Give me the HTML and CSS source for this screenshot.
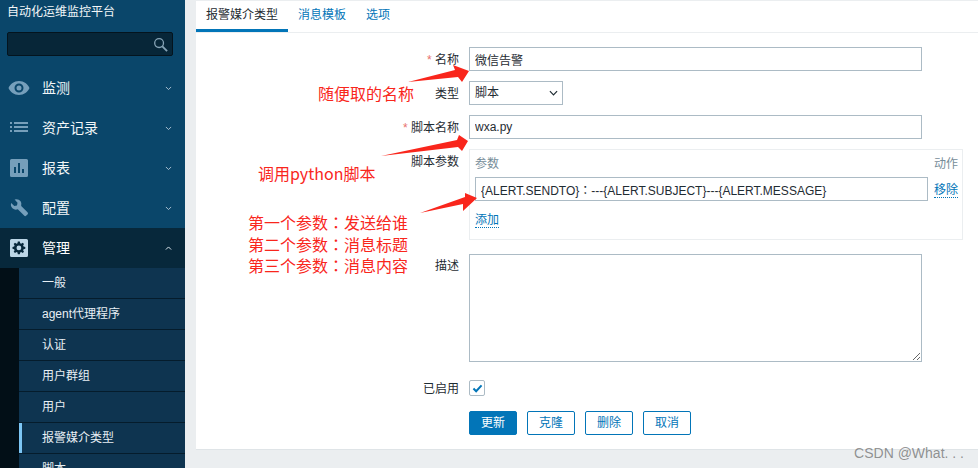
FILE: index.html
```html
<!DOCTYPE html>
<html lang="zh">
<head>
<meta charset="utf-8">
<title>报警媒介类型</title>
<link rel="stylesheet" href="styles.css">
</head>
<body>
<div class="page">
  <aside class="sidebar">
    <div class="brand">自动化运维监控平台</div>
    <div class="search">
      <svg class="search-icon" viewBox="0 0 16 16"><circle cx="6.500" cy="6.500" r="4.700" fill="none" stroke="currentColor" stroke-width="1.400"/><path d="M10 10l5 5" stroke="currentColor" stroke-width="2" fill="none"/></svg>
    </div>
    <nav class="nav">
      <div class="nav-item">
        <svg class="nav-icon" viewBox="0 0 22 16"><path fill-rule="evenodd" d="M11 1C6 1 2.300 4 .5 8c1.800 4 5.500 7 10.500 7s8.700-3 10.500-7C19.700 4 16 1 11 1zm0 2.500a4.500 4.500 0 1 1 0 9 4.500 4.500 0 0 1 0-9zM11 5.500a2.500 2.500 0 1 0 0 5 2.500 2.500 0 0 0 0-5z"/></svg>
        <span class="nav-label">监测</span>
        <svg class="chev" viewBox="0 0 8 5"><path d="M1 1l3 3 3-3"/></svg>
      </div>
      <div class="nav-item">
        <svg class="nav-icon" viewBox="-2 -3 22 18"><path d="M0 0h2v2H0zM4 0h14v2H4zM0 4h2v2H0zM4 4h14v2H4zM0 8h2v2H0zM4 8h14v2H4z"/></svg>
        <span class="nav-label">资产记录</span>
        <svg class="chev" viewBox="0 0 8 5"><path d="M1 1l3 3 3-3"/></svg>
      </div>
      <div class="nav-item">
        <svg class="nav-icon" viewBox="0 0 18 18"><path fill-rule="evenodd" d="M1.500 0h15A1.500 1.500 0 0 1 18 1.500v15a1.500 1.500 0 0 1-1.500 1.500h-15A1.500 1.500 0 0 1 0 16.500v-15A1.500 1.500 0 0 1 1.500 0zM4 8v6h2V8zM8 4v10h2V4zM12 10v4h2v-4z"/></svg>
        <span class="nav-label">报表</span>
        <svg class="chev" viewBox="0 0 8 5"><path d="M1 1l3 3 3-3"/></svg>
      </div>
      <div class="nav-item">
        <svg class="nav-icon" viewBox="0 0 18 18"><path d="M6.500.2a5 5 0 0 1 4.700 6.700l6.300 6.300a1.500 1.500 0 0 1 0 2.200l-1.200 1.200a1.500 1.500 0 0 1-2.200 0L7.800 10.300A5 5 0 0 1 1.200 4L4.300 7 7 6.500 7.500 3.800 4.600.6A5 5 0 0 1 6.500.2z"/></svg>
        <span class="nav-label">配置</span>
        <svg class="chev" viewBox="0 0 8 5"><path d="M1 1l3 3 3-3"/></svg>
      </div>
      <div class="nav-item nav-item-active">
        <svg class="nav-icon" viewBox="0 0 18 18"><path fill-rule="evenodd" d="M1.500 0h15A1.500 1.500 0 0 1 18 1.500v15a1.500 1.500 0 0 1-1.500 1.500h-15A1.500 1.500 0 0 1 0 16.500v-15A1.500 1.500 0 0 1 1.500 0zM7.800 2.500l-.3 1.700-1 .5-1.500-.9-1.300 1.300.9 1.500-.5 1-1.600.4v1.800l1.600.4.5 1-.9 1.500 1.300 1.300 1.500-.9 1 .5.3 1.700h2l.4-1.700 1-.5 1.500.9 1.300-1.300-.9-1.500.5-1 1.700-.4V8l-1.700-.4-.5-1 .9-1.500-1.300-1.300-1.500.9-1-.5-.4-1.700zM8.900 6.500a2.400 2.400 0 1 1 0 4.800 2.400 2.400 0 0 1 0-4.800z"/></svg>
        <span class="nav-label">管理</span>
        <svg class="chev" viewBox="0 0 8 5"><path d="M1 4l3-3 3 3"/></svg>
      </div>
    </nav>
    <ul class="subnav">
      <li class="sub-item">一般</li>
      <li class="sub-item">agent代理程序</li>
      <li class="sub-item">认证</li>
      <li class="sub-item">用户群组</li>
      <li class="sub-item">用户</li>
      <li class="sub-item sub-item-active">报警媒介类型</li>
      <li class="sub-item">脚本</li>
    </ul>
  </aside>

  <main class="main">
    <section class="card">
      <div class="tabs">
        <a class="tab tab-active">报警媒介类型</a>
        <a class="tab">消息模板</a>
        <a class="tab">选项</a>
      </div>
      <form class="form">
        <div class="row">
          <label class="label"><span class="req">*</span> 名称</label>
          <input class="input" type="text" value="微信告警">
        </div>
        <div class="row">
          <label class="label">类型</label>
          <div class="select"><span>脚本</span><svg class="select-chev" viewBox="0 0 10 6"><path d="M1 1l4 4 4-4"/></svg></div>
        </div>
        <div class="row">
          <label class="label"><span class="req">*</span> 脚本名称</label>
          <input class="input" type="text" value="wxa.py">
        </div>
        <div class="row row-params">
          <label class="label">脚本参数</label>
          <div class="params">
            <div class="params-head">参数</div>
            <div class="params-head">动作</div>
            <input class="input input-param" lang="zh-Hant" type="text" value="{ALERT.SENDTO}：---{ALERT.SUBJECT}---{ALERT.MESSAGE}">
            <a class="link link-row">移除</a>
            <div class="params-add"><a class="link">添加</a></div>
          </div>
        </div>
        <div class="row row-desc">
          <label class="label label-desc">描述</label>
          <textarea class="textarea"></textarea>
        </div>
        <div class="row row-check">
          <label class="label">已启用</label>
          <span class="check"><svg viewBox="0 0 12 10"><path d="M1.500 5l3 3 6-6.500"/></svg></span>
        </div>
        <div class="row">
          <span></span>
          <div class="buttons">
            <button type="button" class="btn btn-primary">更新</button>
            <button type="button" class="btn">克隆</button>
            <button type="button" class="btn">删除</button>
            <button type="button" class="btn">取消</button>
          </div>
        </div>
      </form>
    </section>
  </main>
</div>

<svg class="arrows" viewBox="0 0 978 468">
  <polygon points="408,82 455,70 453,65 469,71 462,82 458,77"/>
  <polygon points="381,156 457,140 459,135 468,141 462,151 458,147"/>
  <polygon points="420,213 465,197 465,193 477,198 463,211 463,204"/>
</svg>
<div class="note note-name">随便取的名称</div>
<div class="note note-script">调用python脚本</div>
<div class="note note-params">第一个参数<span class="colon" lang="zh-Hant">：</span>发送给谁<br>第二个参数<span class="colon" lang="zh-Hant">：</span>消息标题<br>第三个参数<span class="colon" lang="zh-Hant">：</span>消息内容</div>
<div class="watermark">CSDN @What. . .</div>
</body>
</html>
```
FILE: styles.css
```css
* { box-sizing: border-box; }
html, body { margin: 0; height: 100%; overflow: hidden; }
body {
  position: relative;
  background: #ebeef0;
  font: 12px/1.2 "Liberation Sans", "Noto Sans CJK SC", sans-serif;
  color: #1f2c33;
}
.page { display: flex; height: 468px; }

.sidebar { flex: 0 0 185px; background: #0a466a; color: #f2f6f8; overflow: hidden; }
.brand { height: 32px; padding: 6px 7px 0; line-height: 12px; }
.search {
  height: 24px; margin: 0 12px 0 7px; width: 166px;
  background: #072638; border: 1px solid #04141e; border-radius: 2px;
  display: flex; align-items: center; justify-content: flex-end; padding-right: 4px;
}
.search-icon { width: 15px; height: 15px; color: #86a3b5; }
.nav { margin-top: 12px; }
.nav-item { height: 40px; display: flex; align-items: center; padding-left: 10px; }
.nav-icon { flex: 0 0 22px; width: 22px; height: 18px; margin-left: -2px; fill: #769fbb; }
.nav-label { margin-left: 12px; font-size: 14px; flex: 1; }
.chev { width: 7px; height: 4.500px; margin-right: 13px; fill: none; stroke: #a9c0d0; stroke-width: 1.100; }
.nav-item-active { background: #07283b; color: #fff; }
.nav-item-active .nav-icon { fill: #bcd6e6; }
.nav-item-active .chev { stroke: #e3ecf2; }
.subnav { list-style: none; margin: 0; padding: 0 0 0 19px; background: #020f17; }
.sub-item {
  height: 31px; padding-left: 23px; line-height: 30px;
  background: #0e3450; border-bottom: 1px solid #051c2c; color: #e8eff4;
}
.sub-item-active { box-shadow: inset 3px 0 0 #7cc6f5; }

.main { flex: 1; padding: 1px 0 18px 11px; min-width: 0; }
.card { height: 100%; background: #fff; border-bottom: 1px solid #dfe4e7; }
.tabs { height: 32px; display: flex; border-bottom: 1px solid #ebeef0; }
.tab { padding: 0 10px; line-height: 28px; height: 31px; color: #0275b8; }
.tab-active { color: #1f2c33; border-bottom: 3px solid #0275b8; }

.form { padding-top: 14px; }
.row { display: grid; grid-template-columns: 263px auto; column-gap: 10px; margin-bottom: 10px; justify-content: start; }
.row-params { margin-bottom: 14px; }
.row-desc { margin-bottom: 18px; }
.row-check { margin-bottom: 15px; }
.label { text-align: right; line-height: 26px; height: 24px; }
.label-desc { line-height: 24px; }
.row-check .label { line-height: 18px; height: 16px; }
.req { color: #e8706e; }

.input {
  display: block; width: 453px; height: 24px; padding: 0 5px; margin: 0;
  border: 1px solid #acbbc5; background: #fff; color: #1f2c33; font: inherit; border-radius: 0; outline: 0;
}
.select {
  width: 94px; height: 24px; border: 1px solid #acbbc5; padding: 0 5px;
  display: flex; align-items: center; justify-content: space-between;
}
.select-chev { width: 9px; height: 6px; margin-right: -1px; fill: none; stroke: #1f2c33; stroke-width: 1.300; }

.params {
  width: 494px; height: 91px; border: 1px solid #ebeef0; padding: 7px 4px 0 5px;
  display: grid; grid-template-columns: 453px 24px; grid-auto-rows: min-content; column-gap: 6px;
  align-items: center;
}
.params-head { color: #768d99; height: 20px; line-height: 14px; }
.input-param { width: 453px; font-family: "Liberation Sans", "Noto Sans CJK TC", sans-serif; }
.params-add { grid-column: 1 / -1; padding-top: 12px; line-height: 14px; }
.link { color: #0275b8; border-bottom: 1px dotted #0275b8; justify-self: start; line-height: 14px; }
.link-row { margin-top: 2px; }

.textarea {
  display: block; width: 453px; height: 108px; margin: 0; padding: 5px;
  border: 1px solid #acbbc5; border-radius: 0; background: #fff; outline: 0; font: inherit;
}
.check {
  display: flex; align-items: center; justify-content: center;
  width: 16px; height: 16px; border: 1px solid #acbbc5; border-radius: 2px;
}
.check svg { width: 11px; height: 9px; fill: none; stroke: #0275b8; stroke-width: 2.200; }

.buttons { display: flex; gap: 10px; }
.btn {
  width: 48px; height: 24px; padding: 0; background: #fff; color: #0275b8;
  border: 1px solid #0275b8; border-radius: 2px; font: inherit;
}
.btn-primary { background: #0275b8; color: #fff; }

.arrows { position: absolute; left: 0; top: 0; width: 978px; height: 468px; pointer-events: none; }
.arrows polygon { fill: #f9261c; }
.note { position: absolute; color: #f9261c; font-size: 16px; line-height: 21.500px; font-family: "Noto Sans CJK SC", sans-serif; }
.note-name { left: 318px; top: 83px; }
.note-script { left: 258px; top: 163px; }
.note-params { left: 248px; top: 213px; font-family: "Liberation Sans", "Noto Sans CJK SC", sans-serif; }
.colon { font-family: "Liberation Sans", "Noto Sans CJK TC", sans-serif; }
.watermark { position: absolute; right: 14px; top: 445px; font-size: 14px; color: rgba(90, 90, 90, .65); white-space: nowrap; }
```
